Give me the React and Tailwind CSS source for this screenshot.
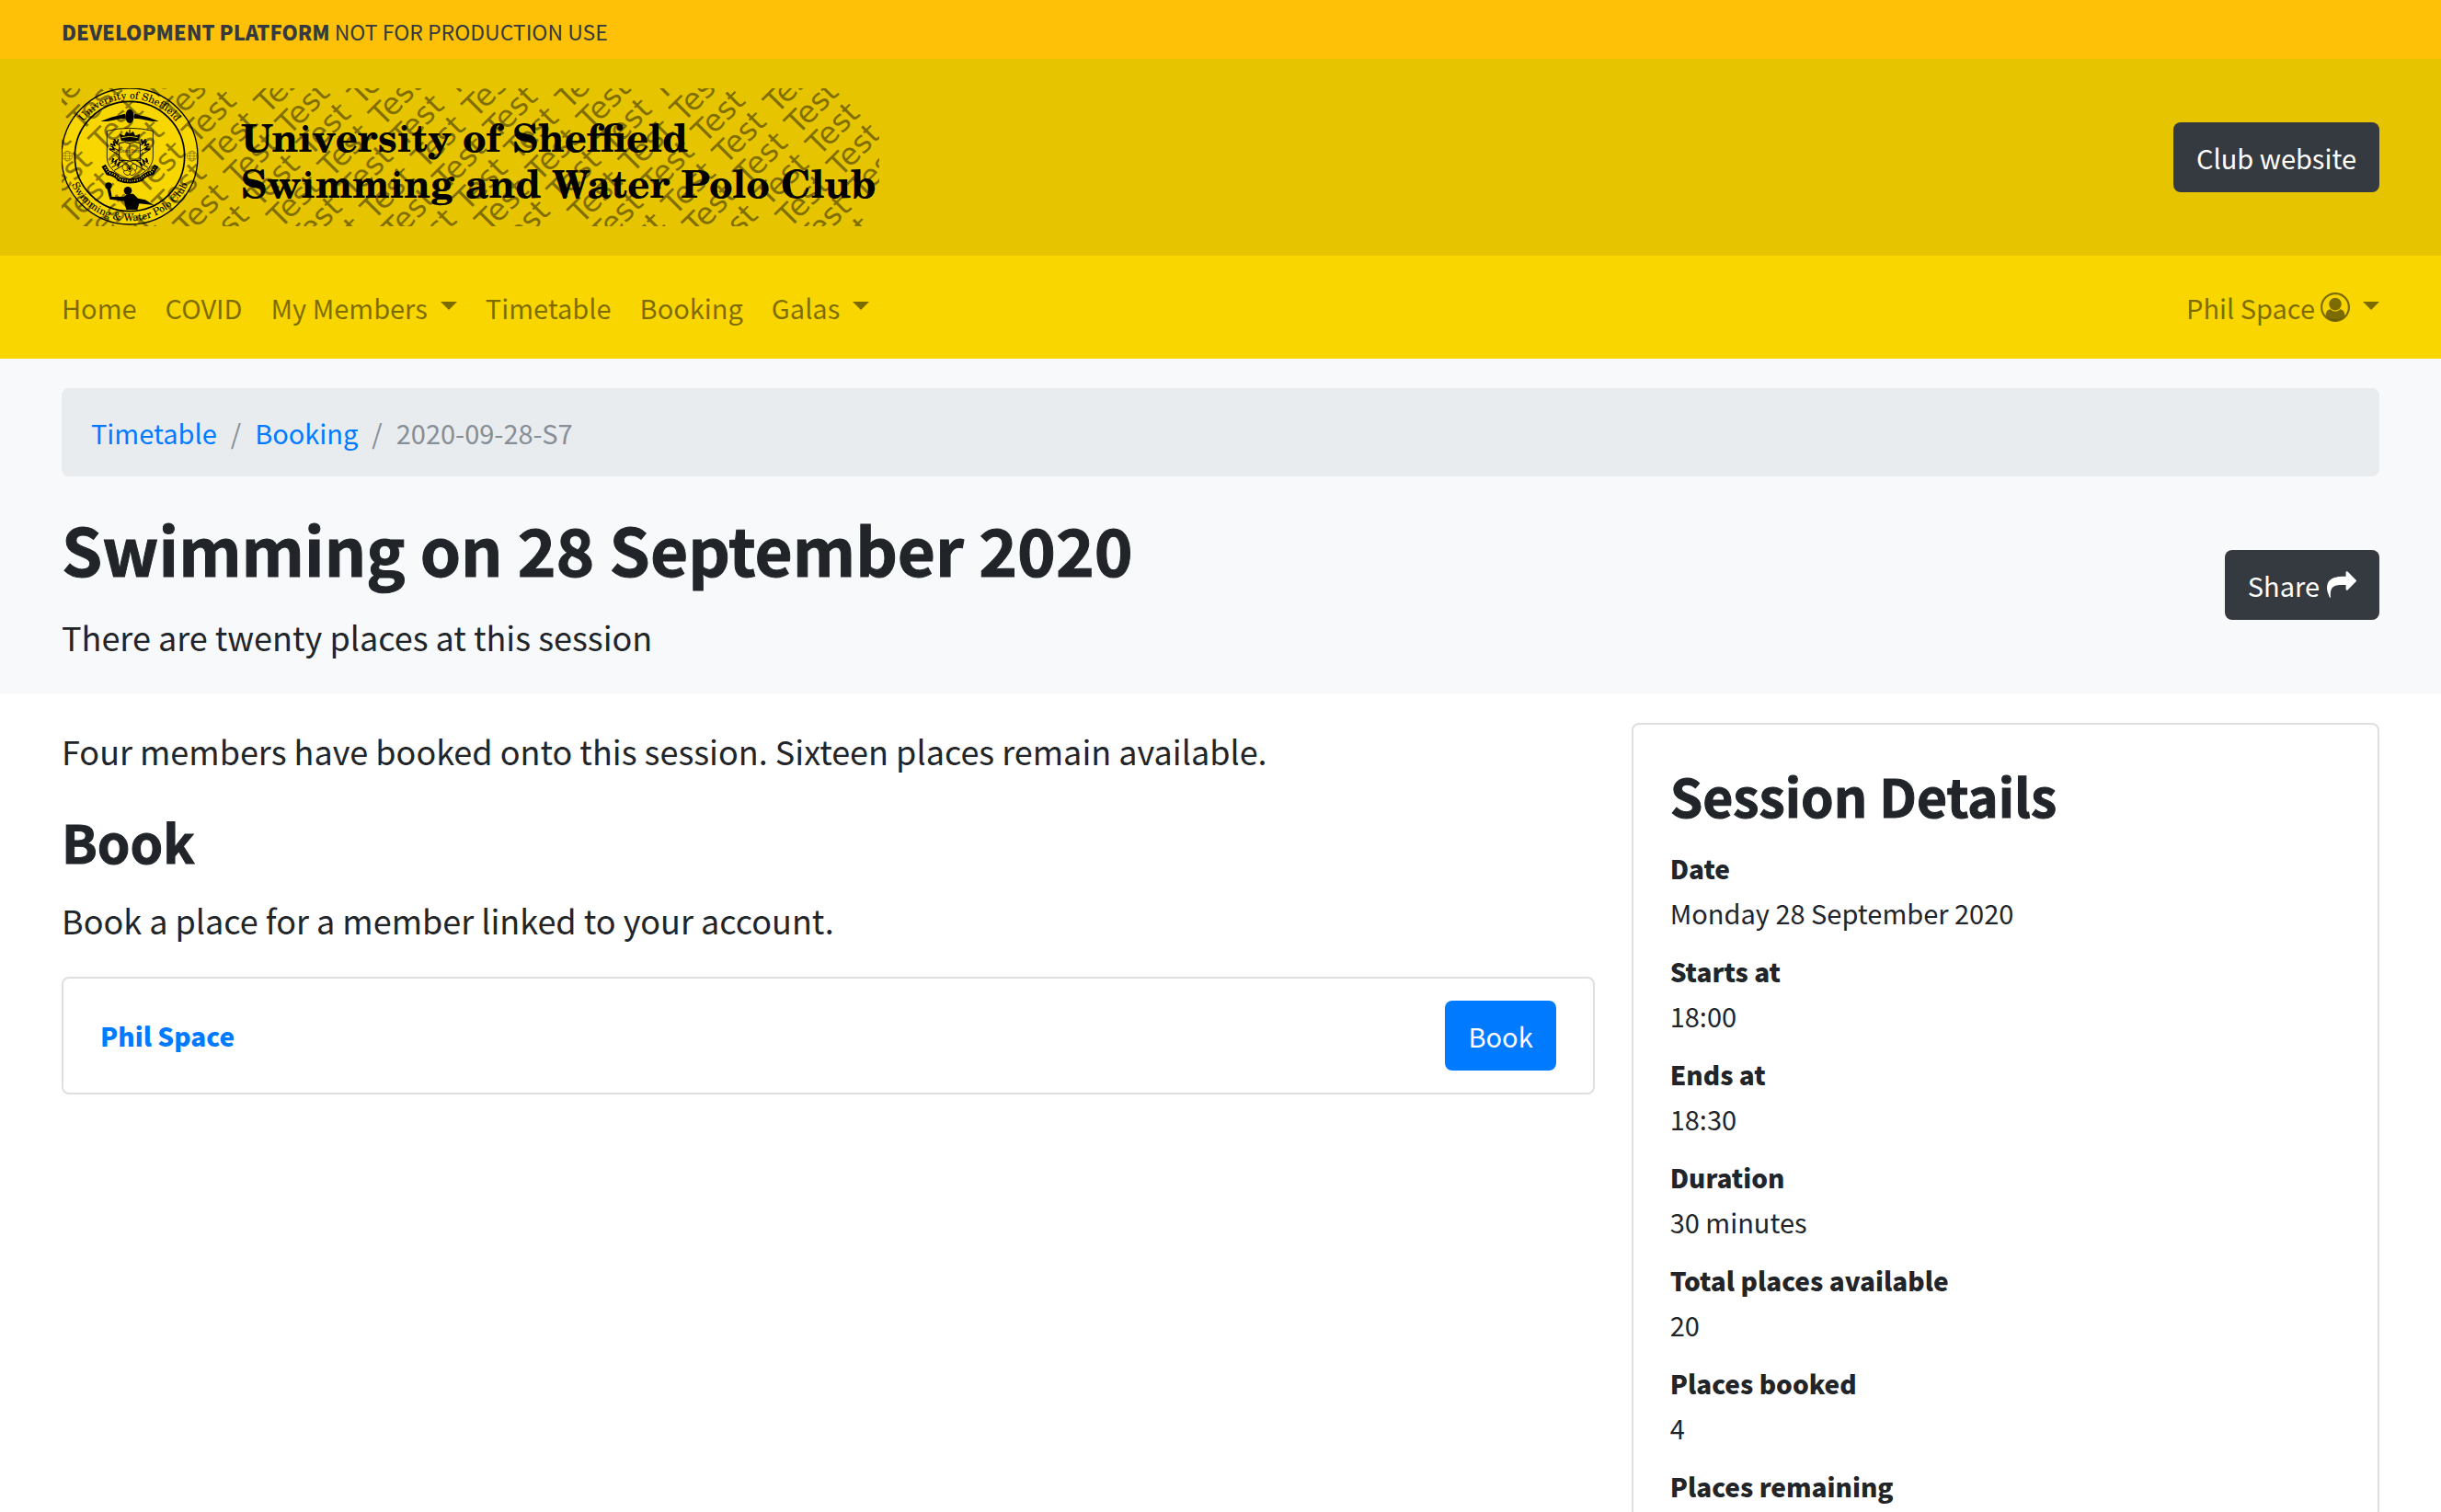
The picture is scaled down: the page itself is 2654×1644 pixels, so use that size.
const TEST_WORDS = [];
for (let row = -18; row <= 10; row += 1) {
  for (let col = -9; col <= 4; col += 1) {
    const x = 676 + col * 55.4 + row * 23.03;
    const y = 38 - col * 55.4 + row * 23.03;
    if (x > -50 && x < 874 && y > 0 && y < 200) TEST_WORDS.push([x, y]);
  }
}

const LEFT_LINKS = [
  { label: 'Home' },
  { label: 'COVID' },
  { label: 'My Members', menu: true },
  { label: 'Timetable' },
  { label: 'Booking' },
  { label: 'Galas', menu: true },
];

const DETAILS = [
  ['Date', 'Monday 28 September 2020'],
  ['Starts at', '18:00'],
  ['Ends at', '18:30'],
  ['Duration', '30 minutes'],
  ['Total places available', '20'],
  ['Places booked', '4'],
  ['Places remaining', '16'],
];

function Caret() {
  return (
    <span
      aria-hidden="true"
      className="mb-1 ml-[14px] h-0 w-0 border-x-9 border-t-9 border-x-transparent border-t-current"
    />
  );
}

function UserIcon() {
  return (
    <svg viewBox="0 0 32 32" className="ml-[6px] size-8" aria-hidden="true">
      <circle cx="16" cy="16" r="14.9" fill="none" stroke="currentColor" strokeWidth="2.2" />
      <circle cx="16" cy="12.6" r="6.8" fill="currentColor" />
      <path
        d="M5.6 25.2C5.6 21 7.6 18.4 10.8 18.2 12.200 19.800 14 20.600 16 20.600s3.800-.8 5.200-2.400c3.200.2 5.200 2.800 5.200 7C23.800 28.400 20 30.300 16 30.300S8.200 28.400 5.600 25.200z"
        fill="currentColor"
      />
    </svg>
  );
}

function ShareIcon() {
  return (
    <svg viewBox="0 0 1792 1792" className="ml-2 size-8" fill="currentColor" aria-hidden="true">
      <path d="M1792 640q0 26-19 45l-512 512q-19 19-45 19t-45-19-19-45V896H928q-98 0-175.500 6t-154 21.500-133 42.500-105.500 69.500-80 101-48.500 138.500-17.500 181q0 55 5 123 0 6 2.500 23.500t2.500 26.500q0 15-8.500 25t-23.500 10q-16 0-28-17-7-9-13-22t-13.500-30-10.500-24Q0 1286 0 1120q0-199 53-333 162-403 875-403h224V128q0-26 19-45t45-19 45 19l512 512q19 19 19 45z" />
    </svg>
  );
}

function Crest() {
  return (
    <g transform="translate(-3 -4) scale(0.3333)" stroke="#000">
      <circle cx="231" cy="234" r="222" fill="#f8d600" strokeWidth="4" />
      <circle cx="231" cy="234" r="179" fill="none" strokeWidth="5" />
      {[28, 434].map((x) => (
        <g key={x} fill="none" strokeWidth="1.500" opacity="0.6">
          <circle cx={x} cy="233" r="16" />
          <ellipse cx={x} cy="233" rx="7" ry="16" />
          <path d={`M${x - 16} 233h32M${x - 13} 224h26M${x - 13} 242h26`} />
        </g>
      ))}
      <g fill="#000" stroke="none">
        <ellipse cx="231" cy="103" rx="14" ry="23" />
        <path d="M137 120C165 106 190 102 216 95L218 110C190 110 166 122 137 120z" />
        <path d="M326 120C298 106 273 102 247 95L245 110C273 110 297 122 326 120z" />
      </g>
      <path
        d="M157 151Q195 142 231 142Q270 142 307 151V236C307 272 270 296 231 308C190 296 157 272 157 236z"
        fill="none"
        strokeWidth="2.500"
      />
      <path
        d="M204 182L199 162L214 168L221 154L231 162V146V162L242 154L249 168L264 162L259 182Q231 188 204 182z"
        strokeWidth="2"
      />
      <path d="M205 173q26-8 52 0" stroke="#f8d600" strokeWidth="2.500" fill="none" />
      <g strokeWidth="3" fill="none">
        <path d="M168 200L290 270M166 212L282 280M178 186L294 258M295 200L173 270M297 212L181 280M285 186L169 258" />
        <path d="M168 194l14 4-4-14M164 210l16 2-6-12M180 178l10 14 4-14M295 194l-14 4 4-14M299 210l-16 2 6-12M283 178l-10 14-4-14" strokeWidth="5" />
        <path d="M178 240l-4 12M188 246l-5 14M198 252l-6 16M284 240l5 12M274 246l6 14M264 252l7 16" strokeWidth="6" />
      </g>
      <path d="M197 191Q216 184 231 192Q248 184 265 191V249Q248 243 231 250Q214 243 197 249z" fill="#f8d600" strokeWidth="3" />
      <path d="M231 192V250" strokeWidth="2" />
      <text x="231" y="222" textAnchor="middle" fontSize="13" stroke="none" fill="#333" className="font-['TeX_Gyre_Schola','Liberation_Serif',serif]">
        Disce Doce
      </text>
      <g fill="#f8d600" strokeWidth="2">
        {[0, 72, 144, 216, 288].map((a) => (
          <ellipse key={a} cx="231" cy="260" rx="11" ry="10" transform={`rotate(${a} 231 274)`} />
        ))}
        <circle cx="231" cy="274" r="9" />
        <circle cx="231" cy="274" r="4" fill="#000" />
      </g>
      <path d="M146 264L160 288Q185 292 196 308Q231 322 268 308Q280 292 304 288L318 264" fill="none" strokeWidth="15" />
      <path d="M150 270L162 287Q185 293 198 308Q231 320 266 308Q280 293 302 287L314 270" fill="none" stroke="#f8d600" strokeWidth="6" strokeDasharray="3 5" />
      <g fill="#000" stroke="none">
        <circle cx="162" cy="330" r="11" />
        <ellipse cx="225" cy="346" rx="13" ry="13" />
        <path d="M157 338L168 338L173 366L212 366L222 358L243 356L258 371L282 376L310 393L262 388L256 408H220L213 380L166 374z" />
      </g>
      <path id="crest-top" d="M43 234A188 188 0 0 1 419 234" fill="none" stroke="none" />
      <path id="crest-bottom" d="M20 234A211 211 0 0 0 442 234" fill="none" stroke="none" />
      <g stroke="none" fill="#000" fontSize="34" textAnchor="middle" className="font-['TeX_Gyre_Schola','Liberation_Serif',serif]">
        <text><textPath href="#crest-top" startOffset="50%">University of Sheffield</textPath></text>
        <text><textPath href="#crest-bottom" startOffset="50%">Swimming &amp; Water Polo Club</textPath></text>
      </g>
    </g>
  );
}

function Logo() {
  return (
    <svg viewBox="0 0 889 150" className="h-[150px] w-[889px] overflow-hidden" role="img" aria-label="University of Sheffield Swimming and Water Polo Club">
      <Crest />
      <g fill="#000" fillOpacity="0.45" fontSize="33" className="font-['DejaVu_Sans',sans-serif]">
        {TEST_WORDS.map(([x, y]) => (
          <text key={`${x},${y}`} transform={`translate(${x} ${y}) rotate(-45)`}>Test</text>
        ))}
      </g>
      <g fill="#000" fontSize="42" fontWeight="700" className="font-['TeX_Gyre_Schola','Liberation_Serif',serif]">
        <text x="195" y="69">University of Sheffield</text>
        <text x="195" y="119">Swimming and Water Polo Club</text>
      </g>
    </svg>
  );
}

export default function App() {
  return (
    <div className="h-screen overflow-hidden bg-white font-['Noto_Sans_CJK_SC','Open_Sans',sans-serif] text-[29px] leading-[48px] text-[#212529]">
      <div className="bg-[#ffc107] px-[67px] pt-[14px] pb-[10px] text-[23px] leading-10 text-[#343a40]">
        <strong className="text-[22px] font-black">DEVELOPMENT PLATFORM</strong> NOT FOR PRODUCTION USE
      </div>

      <header className="flex items-center justify-between bg-[#e6c400] px-[67px] py-8">
        <a href="#home"><Logo /></a>
        <a href="#club" className="rounded-lg bg-[#343a40] px-[25px] py-[14px] text-white">Club website</a>
      </header>

      <nav className="flex justify-between bg-[#f9d600] px-[67px] py-8 text-black/50">
        <ul className="flex gap-[31px]">
          {LEFT_LINKS.map(({ label, menu }) => (
            <li key={label}>
              {menu ? (
                <button type="button" className="flex items-center">{label}<Caret /></button>
              ) : (
                <a href="#nav">{label}</a>
              )}
            </li>
          ))}
        </ul>
        <button type="button" className="flex items-center">Phil Space<UserIcon /><Caret /></button>
      </nav>

      <section className="bg-[#f8f9fb] px-[67px] py-8">
        <ol className="mb-8 flex gap-[15px] rounded-lg bg-[#e8ecef] px-8 py-6 text-[#868e96]">
          <li><a href="#timetable" className="text-[#007bff]">Timetable</a></li>
          <li aria-hidden="true">/</li>
          <li><a href="#booking" className="text-[#007bff]">Booking</a></li>
          <li aria-hidden="true">/</li>
          <li>2020-09-28-S7</li>
        </ol>
        <div className="flex items-center justify-between">
          <div>
            <h1 className="mb-5 text-[71px] leading-[92px] font-bold [-webkit-text-stroke:1px]">Swimming on 28 September 2020</h1>
            <p className="text-4xl leading-[60px]">There are twenty places at this session</p>
          </div>
          <button type="button" className="flex items-center rounded-lg bg-[#343a40] px-[25px] py-[14px] text-white">
            Share<ShareIcon />
          </button>
        </div>
      </section>

      <main className="grid grid-cols-12 items-start gap-10 px-[67px] pt-8">
        <div className="col-span-8">
          <p className="mb-8 text-4xl leading-[60px]">
            Four members have booked onto this session. Sixteen places remain available.
          </p>
          <h2 className="mb-5 text-[57px] leading-[72px] font-bold [-webkit-text-stroke:1px]">Book</h2>
          <p className="mb-8 text-4xl leading-[60px]">Book a place for a member linked to your account.</p>
          <div className="flex items-center justify-between rounded-lg border-2 border-[#dfdfdf] px-10 py-6">
            <a href="#member" className="text-[28px] font-black text-[#007bff]">Phil Space</a>
            <button type="button" className="rounded-lg bg-[#007bff] px-[25px] py-[14px] text-white">Book</button>
          </div>
        </div>

        <aside className="col-span-4 rounded-lg border-2 border-[#dfdfdf] p-10">
          <h2 className="mb-5 text-[57px] leading-[72px] font-bold [-webkit-text-stroke:1px]">Session Details</h2>
          <dl>
            {DETAILS.map(([term, value]) => (
              <div key={term} className="mb-4">
                <dt className="text-[28px] font-black">{term}</dt>
                <dd>{value}</dd>
              </div>
            ))}
          </dl>
        </aside>
      </main>
    </div>
  );
}
